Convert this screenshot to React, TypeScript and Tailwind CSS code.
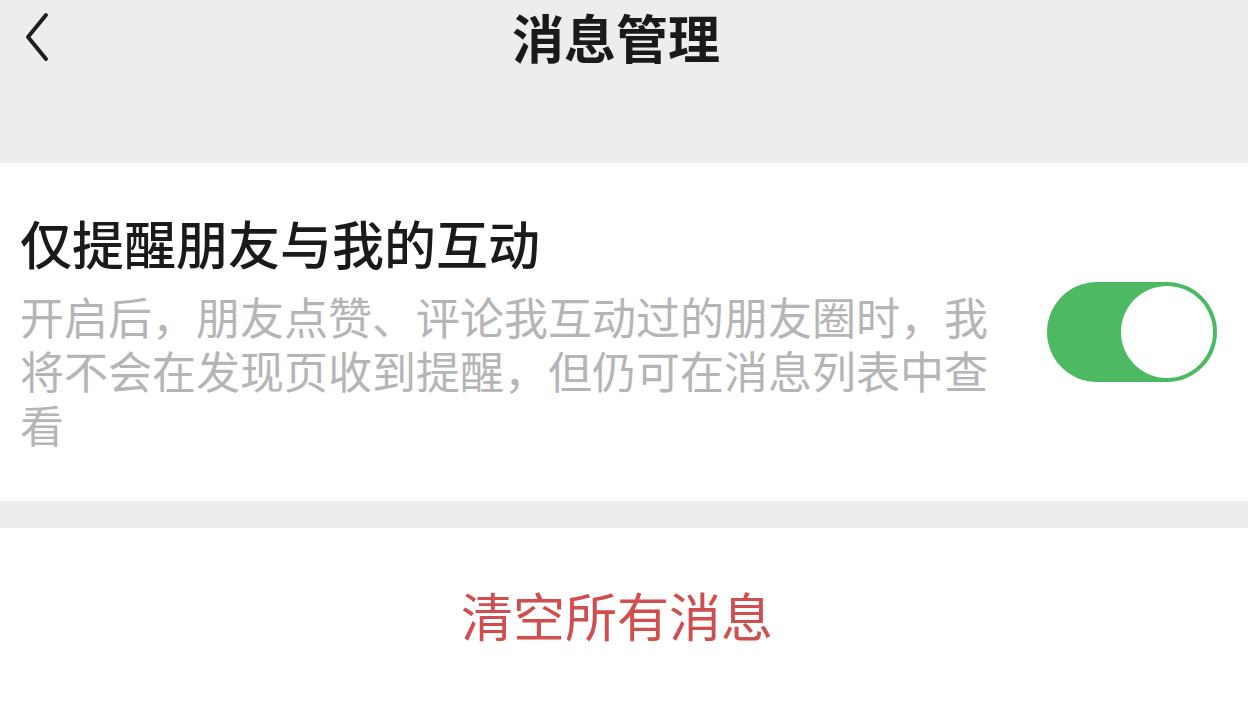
import React from 'react';

export default function App() {
  const font = { fontFamily: '"Noto Sans CJK SC", "Noto Sans", sans-serif' };
  return (
    <div style={font} className="w-[1248px] h-[702px] overflow-hidden bg-white">
      <header className="h-[163px] bg-[#ededed] relative">
        <div className="h-[74px] flex items-center justify-center pr-[16px]">
          <h1 className="text-[52px] leading-none font-bold text-[#1a1a1a]">消息管理</h1>
        </div>
        <button className="absolute left-[14px] top-[8px] w-[44px] h-[60px] flex items-center justify-center">
          <svg width="30" height="54" viewBox="0 0 30 54" fill="none">
            <path d="M25 4 L7 26 L25 48" stroke="#1f1f1f" strokeWidth="4" strokeLinecap="round" strokeLinejoin="round" />
          </svg>
        </button>
      </header>

      <section className="h-[338px] flex items-center justify-between pl-[20px] pr-[31px]">
        <div className="w-[988px]">
          <p className="text-[52px] leading-[60px] font-medium text-[#1a1a1a] mb-[16px]">仅提醒朋友与我的互动</p>
          <p className="text-[44px] leading-[54px] text-[#b5b5b5]">
            开启后，朋友点赞、评论我互动过的朋友圈时，我将不会在发现页收到提醒，但仍可在消息列表中查看
          </p>
        </div>
        <div className="w-[170px] h-[100px] rounded-full bg-[#4dba63] p-[4px] flex justify-end">
          <div className="w-[92px] h-[92px] rounded-full bg-white" />
        </div>
      </section>

      <div className="h-[27px] bg-[#ededed]" />

      <div className="h-[174px] flex items-center justify-center pr-[14px]">
        <span className="text-[52px] leading-none text-[#d04e4e]">清空所有消息</span>
      </div>
    </div>
  );
}
